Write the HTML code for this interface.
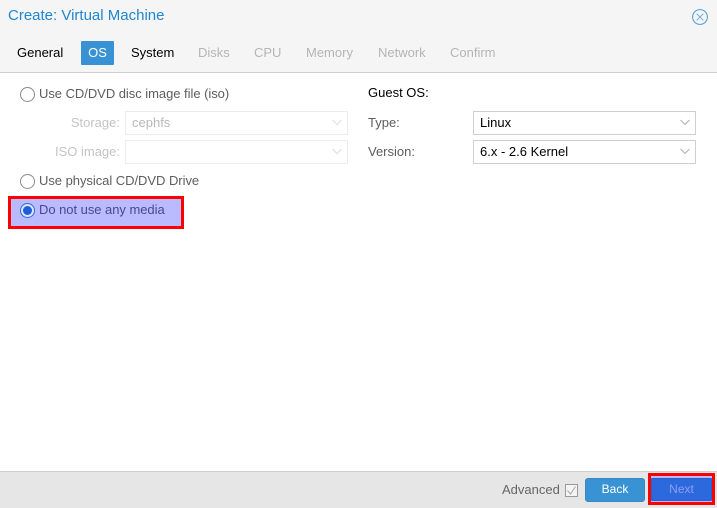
<!DOCTYPE html>
<html>
<head>
<meta charset="utf-8">
<style>
html,body{margin:0;padding:0}
body{width:717px;height:508px;overflow:hidden;position:relative;background:#fff;font-family:"Liberation Sans",sans-serif;font-size:13px;color:#000}
.a{position:absolute;white-space:nowrap;line-height:16px}
.tab{top:45px}
.dis{color:#b5b5b5}
.lbl{color:#5d5d5d}
.rl{letter-spacing:-.04px}
.lbld{color:#c4c4c4;text-align:right}
.field{position:absolute;box-sizing:border-box;height:24px;border:1px solid #cfcfcf;background:#fff;line-height:22px;padding-left:6px}
.field.d{border-color:#ececec;color:#b8b8b8}
.field svg{position:absolute;right:5px;top:7px}
.radio{position:absolute;box-sizing:border-box;width:15px;height:15px;border:1px solid #8a8a8a;border-radius:50%;background:#fff}
.btn{position:absolute;box-sizing:border-box;border:1px solid #3a87c4;border-radius:3px;background:#3892d4;color:#fff;text-align:center;font-size:12px;line-height:21px}
</style>
</head>
<body>
<div class="a" style="left:0;top:0;width:717px;height:72px;background:#f5f5f5;border-bottom:1px solid #cfcfcf;box-sizing:content-box"></div>
<div class="a" style="left:8px;top:7px;font-size:15px;line-height:18px;color:#2086d0">Create: Virtual Machine</div>
<svg class="a" style="left:692px;top:9px" width="16" height="16" viewBox="0 0 16 16" fill="none"><circle cx="8" cy="8" r="7.400" stroke="#4f9ad6"/><path d="M4.700 4.700L11.300 11.300M11.300 4.700L4.700 11.300" stroke="#6daadc"/></svg>

<div class="a tab" style="left:17px">General</div>
<div class="a" style="left:81px;top:41px;width:33px;height:24px;background:#3892d4;border-radius:1px;color:#fff;text-align:center;line-height:24px">OS</div>
<div class="a tab" style="left:131px">System</div>
<div class="a tab dis" style="left:198px">Disks</div>
<div class="a tab dis" style="left:254px">CPU</div>
<div class="a tab dis" style="left:306px">Memory</div>
<div class="a tab dis" style="left:378px">Network</div>
<div class="a tab dis" style="left:450px">Confirm</div>

<div class="radio" style="left:20px;top:87px"></div>
<div class="a lbl rl" style="left:39px;top:86px">Use CD/DVD disc image file (iso)</div>
<div class="a lbld" style="left:20px;width:100px;top:115px">Storage:</div>
<div class="field d" style="left:125px;top:111px;width:223px">cephfs<svg width="10" height="8" viewBox="0 0 10 8" fill="none" stroke="#dcdcdc"><path d="M.5 1L5 5.500L9.500 1"/></svg></div>
<div class="a lbld" style="left:20px;width:100px;top:144px">ISO image:</div>
<div class="field d" style="left:125px;top:140px;width:223px"><svg width="10" height="8" viewBox="0 0 10 8" fill="none" stroke="#dcdcdc"><path d="M.5 1L5 5.500L9.500 1"/></svg></div>
<div class="radio" style="left:20px;top:174px"></div>
<div class="a lbl rl" style="left:39px;top:173px">Use physical CD/DVD Drive</div>

<div class="a" style="left:8px;top:196px;width:176px;height:33px;box-sizing:border-box;border:3px solid #f00;background:#babaff"></div>
<div class="radio" style="left:20px;top:203px;border-color:#2a6be0;background:#dfe4ff"></div>
<div class="a" style="left:23px;top:206px;width:9px;height:9px;border-radius:50%;background:#1c5fdc"></div>
<div class="a rl" style="left:39px;top:202px;color:#484890">Do not use any media</div>

<div class="a" style="left:368px;top:85px">Guest OS:</div>
<div class="a lbl" style="left:368px;top:115px">Type:</div>
<div class="field" style="left:473px;top:111px;width:223px">Linux<svg width="10" height="8" viewBox="0 0 10 8" fill="none" stroke="#b0b0b0"><path d="M.5 1L5 5.500L9.500 1"/></svg></div>
<div class="a lbl" style="left:368px;top:144px">Version:</div>
<div class="field" style="left:473px;top:140px;width:223px">6.x - 2.6 Kernel<svg width="10" height="8" viewBox="0 0 10 8" fill="none" stroke="#b0b0b0"><path d="M.5 1L5 5.500L9.500 1"/></svg></div>

<div class="a" style="left:0;top:471px;width:717px;height:37px;background:#e6e6e6;border-top:1px solid #cfcfcf;box-sizing:border-box"></div>
<div class="a" style="left:502px;top:482px;font-size:13px;color:#666">Advanced</div>
<svg class="a" style="left:565px;top:484px" width="13" height="13" viewBox="0 0 13 13" fill="#f4f4f4" stroke="#9a9a9a"><rect x=".5" y=".5" width="12" height="12"/><path d="M2.500 6.500L5.500 10L10.500 2.500" fill="none" stroke="#a8a8a8"/></svg>
<div class="btn" style="left:585px;top:478px;width:60px;height:24px">Back</div>
<div class="a" style="left:648px;top:473px;width:67px;height:32px;box-sizing:border-box;border:3px solid #f00;background:#babaff"></div>
<div class="btn" style="left:651px;top:478px;width:61px;height:23px;background:#2c69dc;border-color:#2a5fc8;border-radius:1px;color:#8f9ff5">Next</div>
</body>
</html>
